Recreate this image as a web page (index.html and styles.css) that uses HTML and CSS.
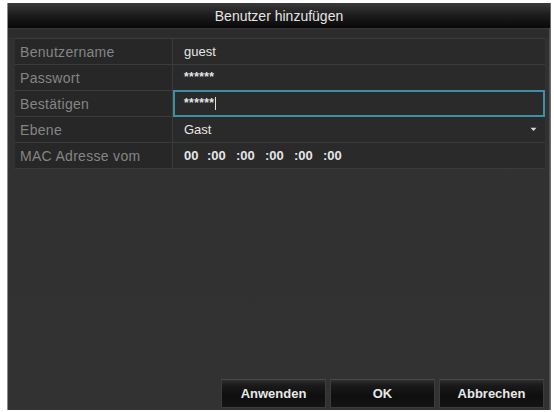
FILE: index.html
```html
<!DOCTYPE html>
<html lang="de">
<head>
<meta charset="utf-8">
<title>Benutzer hinzufügen</title>
<link rel="stylesheet" href="styles.css">
</head>
<body>
<div class="dialog">
  <div class="titlebar">Benutzer hinzufügen</div>
  <div class="content">
    <div class="form">
      <div class="row">
        <div class="label">Benutzername</div>
        <div class="value">guest</div>
      </div>
      <div class="row">
        <div class="label">Passwort</div>
        <div class="value"><span class="stars">******</span></div>
      </div>
      <div class="row">
        <div class="label">Bestätigen</div>
        <div class="value focused"><span class="stars">******</span><span class="caret"></span></div>
      </div>
      <div class="row">
        <div class="label">Ebene</div>
        <div class="value select">Gast
          <svg class="arrow" width="7" height="5" viewBox="0 0 7 5"><path d="M0.5 0.8 L3.5 4 L6.5 0.8 Z" fill="#d8d8d8"/></svg>
        </div>
      </div>
      <div class="row">
        <div class="label">MAC Adresse vom</div>
        <div class="value mac">
          <span class="oct first">00</span><span class="oct">:00</span><span class="oct">:00</span><span class="oct">:00</span><span class="oct">:00</span><span class="oct">:00</span>
        </div>
      </div>
    </div>
    <div class="footer">
      <button class="btn">Anwenden</button>
      <button class="btn">OK</button>
      <button class="btn">Abbrechen</button>
    </div>
  </div>
</div>
</body>
</html>
```
FILE: styles.css
```css
html, body {
  margin: 0;
  padding: 0;
  background: #ffffff;
}
body {
  font-family: "Liberation Sans", Arial, sans-serif;
  width: 554px;
  height: 412px;
  overflow: hidden;
}
.dialog {
  margin: 3px 0 0 7px;
  width: 544px;
  height: 407px;
  box-sizing: border-box;
  border-left: 1px solid #8a8a8a;
  border-right: 1px solid #6a6a6a;
  display: flex;
  flex-direction: column;
  background: #313131;
}
.titlebar {
  height: 25px;
  flex: none;
  display: flex;
  align-items: center;
  justify-content: center;
  color: #e4e4e4;
  font-size: 14px;
  background: linear-gradient(#3a3a3a 0%, #1e1e1e 45%, #080808 100%);
}
.content {
  flex: 1;
  display: flex;
  flex-direction: column;
  padding: 10px 4px 2px 7px;
  background: linear-gradient(#3a3a3a 0px, #2c2c2c 2px, #2c2c2c 9px, #313131 10px, #323232 100%);
  border-right: 1px solid #505050;
}
.form {
  display: flex;
  flex-direction: column;
}
.row {
  display: grid;
  grid-template-columns: 158px 1fr;
  column-gap: 2px;
  height: 25px;
  border-bottom: 1px solid #3b3b3b;
  background: #2a2a2a;
}
.row:first-child {
  border-top: 1px solid #3b3b3b;
}
.label {
  display: flex;
  align-items: center;
  padding-left: 5px;
  font-size: 14px;
  letter-spacing: 0.3px;
  color: #858585;
  background: #272727;
  border-right: 1px solid #3b3b3b;
}
.value {
  display: flex;
  align-items: center;
  padding-left: 9px;
  font-size: 13px;
  color: #e6e6e6;
  position: relative;
}
.value.focused {
  border: 2px solid #3d8fa3;
  margin: -1px 0 -1px -2px;
  padding-left: 9px;
}
.stars {
  font-size: 12px;
  font-weight: bold;
  letter-spacing: 0.4px;
  align-self: flex-start;
  padding-top: 5px;
}
.focused .stars {
  padding-top: 4px;
}
.caret {
  display: inline-block;
  width: 1px;
  height: 13px;
  background: #e0e0e0;
  margin-left: 1px;
}
.select {
  justify-content: space-between;
  padding-right: 8px;
}
.mac {
  font-weight: bold;
  font-size: 13px;
}
.oct {
  width: 29px;
  flex: none;
}
.oct.first {
  width: 23px;
}
.footer {
  margin-top: auto;
  display: flex;
  justify-content: flex-end;
  gap: 4px;
  padding-right: 1px;
}
.btn {
  width: 105px;
  height: 29px;
  font-family: "Liberation Sans", Arial, sans-serif;
  font-size: 13px;
  font-weight: bold;
  color: #e8e8e8;
  background: linear-gradient(#2e2e2e 0%, #1a1a1a 20%, #0e0e0e 60%, #141414 100%);
  border: 1px solid #3c3c3c;
  border-top-color: #4a4a4a;
  padding: 0;
}
```
